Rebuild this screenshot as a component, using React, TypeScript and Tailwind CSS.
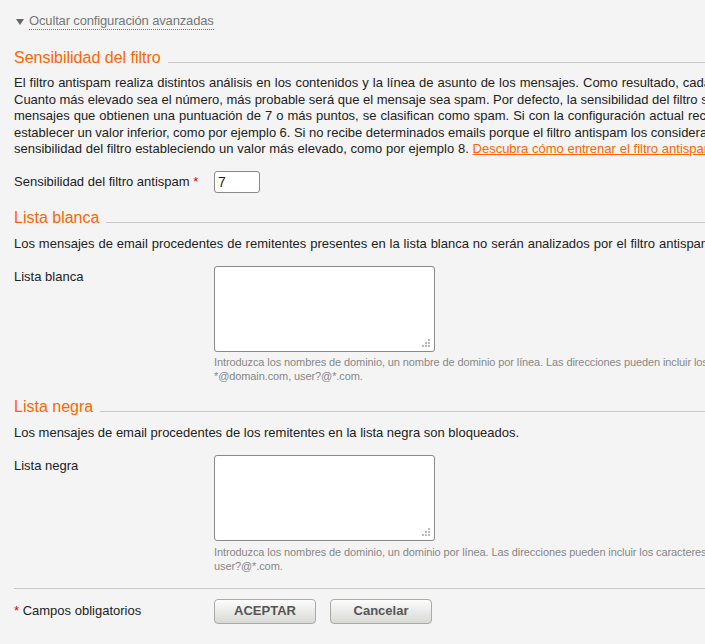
import React from "react";

const F = { fontFamily: '"Liberation Sans", Arial, sans-serif' };

function Heading({ children }: { children: React.ReactNode }) {
  return (
    <div className="flex items-end gap-[7px]">
      <span className="text-[16px] leading-[20px] text-[#ff6600] whitespace-nowrap">{children}</span>
      <div className="flex-1 border-t border-[#c8c8c8] mb-[5px]" />
    </div>
  );
}

function Resize() {
  return (
    <svg width="8" height="8" viewBox="0 0 8 8" className="absolute right-[4px] bottom-[4px]">
      <rect x="6" y="0" width="2" height="2" fill="#bbb" />
      <rect x="3" y="3" width="2" height="2" fill="#bbb" />
      <rect x="6" y="3" width="2" height="2" fill="#bbb" />
      <rect x="0" y="6" width="2" height="2" fill="#bbb" />
      <rect x="3" y="6" width="2" height="2" fill="#bbb" />
      <rect x="6" y="6" width="2" height="2" fill="#bbb" />
    </svg>
  );
}

function TextArea() {
  return (
    <div className="relative w-[221px] h-[86px] bg-white border border-[#8a8a8a] rounded-[3px]">
      <Resize />
    </div>
  );
}

const para: { t: string; cls: string }[] = [
  {
    t: "El filtro antispam realiza distintos análisis en los contenidos y la línea de asunto de los mensajes. Como resultado, cada mensaje obtiene una puntuación.",
    cls: "[word-spacing:0.4px]",
  },
  {
    t: "Cuanto más elevado sea el número, más probable será que el mensaje sea spam. Por defecto, la sensibilidad del filtro se establece de forma que todos los",
    cls: "[word-spacing:0px]",
  },
  {
    t: "mensajes que obtienen una puntuación de 7 o más puntos, se clasifican como spam. Si con la configuración actual recibe mucho spam, pruebe a",
    cls: "[word-spacing:0.4px]",
  },
  {
    t: "establecer un valor inferior, como por ejemplo 6. Si no recibe determinados emails porque el filtro antispam los considera spam, pruebe a reducir la",
    cls: "[word-spacing:-0.15px]",
  },
];

export default function App() {
  return (
    <div style={F} className="w-[705px] h-[644px] overflow-hidden bg-[#f4f4f4] text-[12px] text-[#222]">
      <div className="w-[900px] pl-[14px]">
        <div className="pt-[13px] flex items-center gap-[5px] pl-[2px]">
          <svg width="8" height="8" viewBox="0 0 8 8">
            <path d="M0 1 L8 1 L4 7 Z" fill="#666" />
          </svg>
          <span className="text-[#777] text-[13px] leading-[16px] tracking-[-0.15px] border-b border-dotted border-[#777]">
            Ocultar configuración avanzadas
          </span>
        </div>

        <div className="mt-[18px]">
          <Heading>Sensibilidad del filtro</Heading>
        </div>
        <div className="mt-[7px] leading-[16.5px] text-[13px]">
          {para.map((l, i) => (
            <div key={i} className={"whitespace-nowrap " + l.cls}>
              {l.t}
            </div>
          ))}
          <div className="whitespace-nowrap [word-spacing:0.15px]">
            sensibilidad del filtro estableciendo un valor más elevado, como por ejemplo 8.{" "}
            <a className="text-[#ff6600] underline">Descubra cómo entrenar el filtro antispam.</a>
          </div>
        </div>

        <div className="mt-[13px] flex items-center text-[13px]">
          <div className="w-[200px] shrink-0">
            Sensibilidad del filtro antispam <span className="text-[#e00]">*</span>
          </div>
          <div className="w-[46px] h-[22px] bg-white border border-[#8a8a8a] rounded-[3px] pl-[3px] leading-[20px] text-[14px]">
            7
          </div>
        </div>

        <div className="mt-[15px]">
          <Heading>Lista blanca</Heading>
        </div>
        <div className="mt-[6px] text-[13px] whitespace-nowrap [word-spacing:0.3px]">
          Los mensajes de email procedentes de remitentes presentes en la lista blanca no serán analizados por el filtro antispam.
        </div>
        <div className="mt-[13px] flex text-[13px]">
          <div className="w-[200px] shrink-0 pt-[1px]">Lista blanca</div>
          <div>
            <TextArea />
            <div className="mt-[3px] text-[11px] leading-[14px] tracking-[-0.1px] text-[#888] whitespace-nowrap">
              <div>
                Introduzca los nombres de dominio, un nombre de dominio por línea. Las direcciones pueden incluir los caracteres comodín * y ?, por ejemplo:
              </div>
              <div>*@domain.com, user?@*.com.</div>
            </div>
          </div>
        </div>

        <div className="mt-[14px]">
          <Heading>Lista negra</Heading>
        </div>
        <div className="mt-[6px] text-[13px] whitespace-nowrap">
          Los mensajes de email procedentes de los remitentes en la lista negra son bloqueados.
        </div>
        <div className="mt-[12px] flex text-[13px]">
          <div className="w-[200px] shrink-0 pt-[1px]">Lista negra</div>
          <div>
            <TextArea />
            <div className="mt-[4px] text-[11px] leading-[14px] tracking-[-0.1px] text-[#888] whitespace-nowrap">
              <div>
                Introduzca los nombres de dominio, un dominio por línea. Las direcciones pueden incluir los caracteres comodín * y ?, por ejemplo: *@domain.com,
              </div>
              <div>user?@*.com.</div>
            </div>
          </div>
        </div>

        <div className="mt-[15px] border-t border-[#c8c8c8]" />
        <div className="mt-[10px] flex items-center text-[13px]">
          <div className="w-[200px] shrink-0">
            <span className="text-[#e00]">*</span> Campos obligatorios
          </div>
          <button className="w-[102px] h-[25px] rounded-[4px] border border-[#aaa] bg-gradient-to-b from-[#fdfdfd] to-[#d8d8d4] font-bold text-[13px] text-[#555]">
            ACEPTAR
          </button>
          <button className="ml-[14px] w-[102px] h-[25px] rounded-[4px] border border-[#aaa] bg-gradient-to-b from-[#fdfdfd] to-[#d8d8d4] font-bold text-[13px] text-[#555]">
            Cancelar
          </button>
        </div>
      </div>
    </div>
  );
}
